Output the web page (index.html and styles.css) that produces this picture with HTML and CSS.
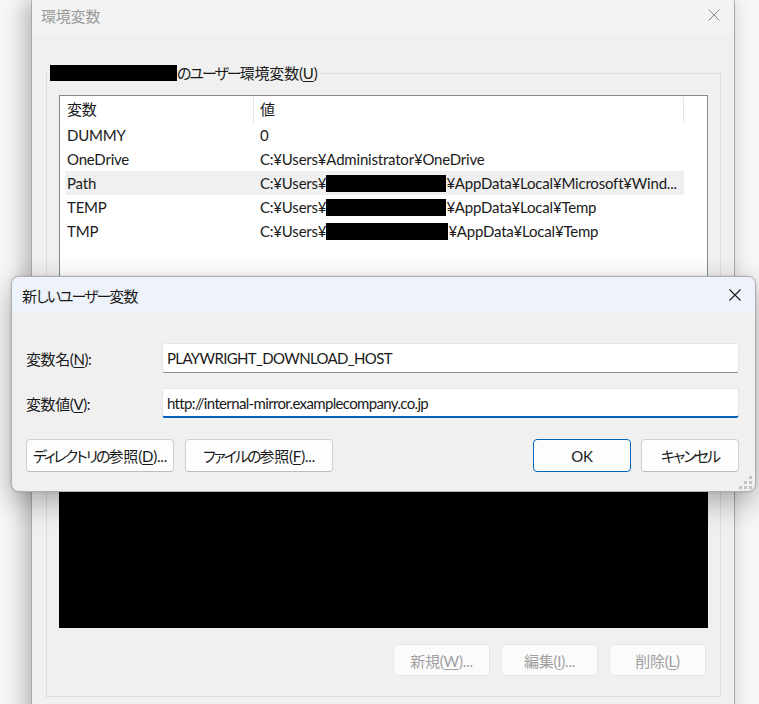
FILE: index.html
```html
<!DOCTYPE html>
<html lang="ja">
<head>
<meta charset="UTF-8">
<title>環境変数</title>
<link rel="stylesheet" href="styles.css">
</head>
<body>
<div class="desk">
  <div class="window">
    <div class="titlebar">
      <span class="title">環境変数</span>
      <svg class="close" width="12" height="12" viewBox="0 0 12 12"><path d="M0.5 0.5L11.5 11.5M11.5 0.5L0.5 11.5" stroke="#8a8a8a" stroke-width="1"/></svg>
    </div>
    <div class="window-body">
      <div class="group">
        <div class="group-label"><span class="redact redact-user"></span><span class="kana">のユーザー</span>環境変数(<u>U</u>)</div>
        <div class="list">
          <div class="list-head">
            <div class="head-name">変数</div>
            <div class="head-value">値</div>
          </div>
          <div class="row"><div class="col-name">DUMMY</div><div class="col-value">0</div></div>
          <div class="row"><div class="col-name">OneDrive</div><div class="col-value">C:¥Users¥Administrator¥OneDrive</div></div>
          <div class="row row-hover"><div class="col-name">Path</div><div class="col-value">C:¥Users¥<span class="redact redact-row"></span>¥AppData¥Local¥Microsoft¥Wind...</div></div>
          <div class="row"><div class="col-name">TEMP</div><div class="col-value">C:¥Users¥<span class="redact redact-row"></span>¥AppData¥Local¥Temp</div></div>
          <div class="row"><div class="col-name">TMP</div><div class="col-value">C:¥Users¥<span class="redact redact-row wide"></span>¥AppData¥Local¥Temp</div></div>
          <div class="list-redact"></div>
        </div>
        <div class="list-buttons">
          <button class="btn btn-disabled" disabled>新規(<u>W</u>)...</button>
          <button class="btn btn-disabled" disabled>編集(<u>I</u>)...</button>
          <button class="btn btn-disabled" disabled>削除(<u>L</u>)</button>
        </div>
      </div>
    </div>
  </div>

  <div class="dialog">
    <div class="dialog-titlebar">
      <span class="dialog-title">新<span class="kana">しいユーザー</span>変数</span>
      <svg class="close" width="12" height="12" viewBox="0 0 12 12"><path d="M0.5 0.5L11.5 11.5M11.5 0.5L0.5 11.5" stroke="#1a1a1a" stroke-width="1.1"/></svg>
    </div>
    <div class="dialog-body">
      <div class="field">
        <label class="field-label">変数名(<u>N</u>):</label>
        <div class="input">PLAYWRIGHT_DOWNLOAD_HOST</div>
      </div>
      <div class="field">
        <label class="field-label">変数値(<u>V</u>):</label>
        <div class="input input-focus">http://internal-mirror.examplecompany.co.jp</div>
      </div>
      <div class="dialog-buttons">
        <button class="btn btn-wide"><span class="kana">ディレクトリの</span>参照(<u>D</u>)...</button>
        <button class="btn btn-wide"><span class="kana">ファイルの</span>参照(<u>F</u>)...</button>
        <div class="spacer"></div>
        <button class="btn btn-primary">OK</button>
        <button class="btn"><span class="kana">キャンセル</span></button>
      </div>
    </div>
    <svg class="grip" width="13" height="13" viewBox="0 0 13 13">
      <rect x="10" y="0" width="3" height="3" fill="#c4c4c4"/>
      <rect x="5" y="5" width="3" height="3" fill="#c4c4c4"/>
      <rect x="10" y="5" width="3" height="3" fill="#c4c4c4"/>
      <rect x="0" y="10" width="3" height="3" fill="#c4c4c4"/>
      <rect x="5" y="10" width="3" height="3" fill="#c4c4c4"/>
      <rect x="10" y="10" width="3" height="3" fill="#c4c4c4"/>
    </svg>
  </div>
</div>
</body>
</html>
```

FILE: styles.css
```css
:root {
  --win-bg: #f0f0f0;
  --title-bg: #f3f3f3;
  --text: #1a1a1a;
  --accent: #0067c0;
}

* {
  margin: 0;
  padding: 0;
  box-sizing: border-box;
}

body {
  font-family: Lato, "Noto Sans", "Noto Sans CJK JP", sans-serif;
  font-feature-settings: "palt";
  font-size: 15px;
  letter-spacing: -0.2px;
  color: var(--text);
  background: #f7f7f7;
  overflow: hidden;
  height: 704px;
}

u {
  text-decoration: underline;
  text-underline-offset: 2px;
}

/* Yu Gothic UI kana are much narrower than Noto's */
.kana {
  letter-spacing: -2px;
}

.desk {
  position: relative;
  display: flow-root;
  height: 704px;
}

/* back window */
.window {
  margin: -5px 0 0 31px;
  width: 704px;
  height: 760px;
  border: 1px solid #a8a8a8;
  border-radius: 8px;
  background: var(--win-bg);
  box-shadow: -6px 4px 22px rgba(0, 0, 0, 0.28);
  overflow: hidden;
}

.titlebar {
  height: 38px;
  padding: 0 14px 0 9px;
  display: flex;
  align-items: center;
  justify-content: space-between;
  background: var(--title-bg);
}

.title {
  color: #9a9a9a;
}

.window-body {
  padding: 39px 13px 0 14px;
}

.group {
  border: 1px solid #dcdcdc;
  padding: 0 12px 20px 12px;
}

.group-label {
  display: flex;
  align-items: center;
  width: fit-content;
  height: 18px;
  margin: -10px 0 0 -10px;
  padding: 0 4px 0 1px;
  background: var(--win-bg);
  line-height: 18px;
  white-space: nowrap;
}

.redact {
  display: inline-block;
  flex-shrink: 0;
  background: #000;
}

.redact-user {
  width: 127px;
  height: 16px;
}

.list {
  margin-top: 13px;
  height: 533px;
  border: 1px solid #858a90;
  background: #fff;
  display: flex;
  flex-direction: column;
}

.list-head {
  display: flex;
  height: 27px;
  padding-top: 1px;
}

.head-name {
  width: 194px;
  padding: 0 0 0 7px;
  line-height: 25px;
  border-right: 1px solid #e3e3e3;
}

.head-value {
  width: 430px;
  padding-left: 6px;
  line-height: 25px;
  border-right: 1px solid #e3e3e3;
}

.row {
  display: flex;
  margin-left: 5px;
  width: 619px;
  height: 24px;
  line-height: 24px;
  white-space: nowrap;
}

.row-hover {
  background: #f0f0f0;
}

.col-name {
  width: 188px;
  flex-shrink: 0;
  padding-left: 2px;
}

.col-value {
  padding-left: 7px;
  display: flex;
  align-items: center;
  overflow: hidden;
}

.redact-row {
  width: 120px;
  height: 17px;
}

.redact-row.wide {
  width: 122px;
}

.list-redact {
  margin: auto -1px -1px;
  height: 141px;
  background: #000;
}

.list-buttons {
  display: flex;
  justify-content: flex-end;
  gap: 11px;
  margin: 16px 2px 0 0;
}

.btn {
  font: inherit;
  font-feature-settings: "palt";
  letter-spacing: -0.2px;
  color: var(--text);
  height: 32px;
  width: 98px;
  border: 1px solid #d1d1d1;
  border-bottom-color: #bdbdbd;
  border-radius: 4px;
  background: #fdfdfd;
  text-align: center;
  white-space: nowrap;
}

.btn .kana {
  letter-spacing: -2px;
}

.btn-disabled {
  width: 97px;
  color: #a0a0a0;
  background: #fbfbfb;
  border-color: #e6e6e6;
}

/* new variable dialog */
.dialog {
  position: absolute;
  left: 11px;
  top: 276px;
  width: 745px;
  height: 216px;
  border: 1px solid #b0b0b0;
  border-radius: 8px;
  background: var(--win-bg);
  overflow: hidden;
  box-shadow: 0 10px 30px rgba(0, 0, 0, 0.3), 0 0 3px rgba(0, 0, 0, 0.15);
}

.dialog-titlebar {
  height: 36px;
  padding: 0 14px 0 10px;
  display: flex;
  align-items: center;
  justify-content: space-between;
  background: #eef2f9;
}

.dialog-title {
  letter-spacing: -0.8px;
}

.dialog-body {
  padding: 30px 16px 0 14px;
}

.field {
  display: flex;
  align-items: center;
  margin-bottom: 15px;
}

.field-label {
  width: 136px;
  padding-top: 1px;
  letter-spacing: -0.4px;
}

.input {
  width: 577px;
  height: 30px;
  padding: 0 4px;
  line-height: 28px;
  letter-spacing: -0.65px;
  background: #fff;
  border: 1px solid #e6e6e6;
  border-bottom-color: #8a8a8a;
  border-radius: 3px;
  white-space: nowrap;
}

.input-focus {
  border-bottom: 2px solid #005fb8;
}

.dialog-buttons {
  display: flex;
  gap: 10px;
  margin-top: 21px;
}

.dialog-buttons .btn {
  height: 33px;
}

.btn-wide {
  width: 148px;
}

.btn-wide + .btn-wide {
  margin-left: 1px;
}

.spacer {
  flex: 1;
}

.btn-primary {
  border-color: var(--accent);
}

.grip {
  position: absolute;
  right: 3px;
  bottom: 2px;
}
```
